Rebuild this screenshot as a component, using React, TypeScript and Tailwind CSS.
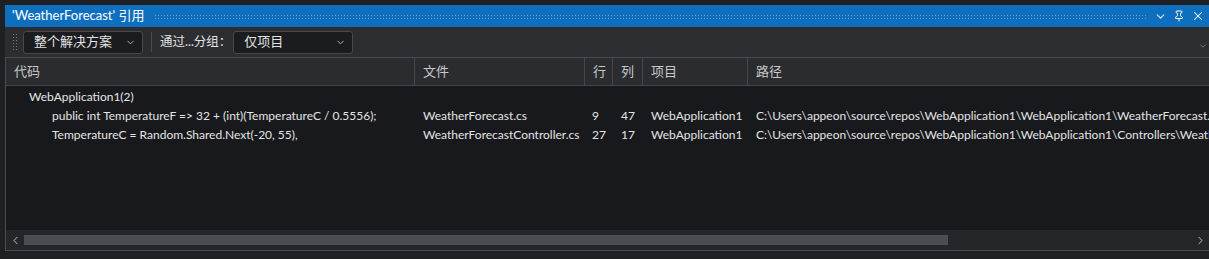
import { ChevronDown, ChevronLeft, ChevronRight, X, Pin } from "lucide-react";

const font = "font-['Lato','Noto_Sans_CJK_SC',sans-serif]";

type Row = {
    code: string;
    file: string;
    line: string;
    col: string;
    project: string;
    path: string;
};

const rows: Row[] = [
    {
        code: "public int TemperatureF => 32 + (int)(TemperatureC / 0.5556);",
        file: "WeatherForecast.cs",
        line: "9",
        col: "47",
        project: "WebApplication1",
        path: "C:\\Users\\appeon\\source\\repos\\WebApplication1\\WebApplication1\\WeatherForecast.cs",
    },
    {
        code: "TemperatureC = Random.Shared.Next(-20, 55),",
        file: "WeatherForecastController.cs",
        line: "27",
        col: "17",
        project: "WebApplication1",
        path: "C:\\Users\\appeon\\source\\repos\\WebApplication1\\WebApplication1\\Controllers\\WeatherForecastController.cs",
    },
];

function Dropdown({ label, width }: { label: string; width: string }) {
    return (
        <div className={`${width} h-[23px] flex items-center justify-between pl-[10px] pr-[6px] bg-[#1b1c1f] border border-[#47494e] rounded-[3px] text-[13px] text-[#e2e2e2]`}>
            <span>{label}</span>
            <ChevronDown size={11} strokeWidth={1.8} className="text-[#c8c8c8]" />
        </div>
    );
}

function HeaderCell({ label, width, last }: { label: string; width: string; last?: boolean }) {
    return (
        <div className={`${width} h-full flex items-center pl-[8px] ${last ? "" : "border-r border-[#45474c]"}`}>
            {label}
        </div>
    );
}

export default function App() {
    return (
        <div className={`w-[1209px] h-[259px] bg-[#1f2023] flex flex-col pt-[5px] pl-[5px] overflow-hidden ${font}`}>
            {/* title bar */}
            <div className="h-[22px] bg-[#0f6fbf] flex items-center pl-[7px] pr-[4px] text-white">
                <span className="text-[13px] whitespace-nowrap">'WeatherForecast' 引用</span>
                <div className="flex-1 h-[5px] ml-[10px] mr-[6px] bg-[radial-gradient(#5b9fdc_0.8px,transparent_0.9px)] bg-[length:3px_3px]" />
                <div className="flex items-center gap-[6px]">
                    <ChevronDown size={13} strokeWidth={2} className="text-[#d8e8f7]" />
                    <Pin size={12} strokeWidth={2} className="text-white" />
                    <X size={14} strokeWidth={1.8} className="text-white" />
                </div>
            </div>

            {/* toolbar */}
            <div className="h-[30px] bg-[#2c2d31] flex items-center pl-[7px] relative">
                <div className="w-[5px] h-[19px] bg-[radial-gradient(circle,#74767a_0.6px,transparent_0.8px)] bg-[length:3px_3px] mr-[6px]" />
                <Dropdown label="整个解决方案" width="w-[120px]" />
                <div className="w-px h-[20px] bg-[#4a4c50] mx-[8px]" />
                <span className="text-[12.5px] text-[#e2e2e2] mr-[2px]">通过...分组：</span>
                <Dropdown label="仅项目" width="w-[120px]" />
                <ChevronDown size={10} strokeWidth={1.8} className="absolute right-[1px] top-[14px] text-[#8a8c90]" />
            </div>

            {/* panel */}
            <div className="flex-1 flex flex-col border-l border-t border-b border-[#4a4c51] bg-[#18191c]">
                <div className="h-[28px] bg-[#2b2c30] border-b border-[#45474c] flex text-[13px] text-[#c9c9c9] shrink-0">
                    <HeaderCell label="代码" width="w-[409px]" />
                    <HeaderCell label="文件" width="w-[170px]" />
                    <HeaderCell label="行" width="w-[28px]" />
                    <HeaderCell label="列" width="w-[30px]" />
                    <HeaderCell label="项目" width="w-[105px]" />
                    <HeaderCell label="路径" width="flex-1" last />
                </div>

                <div className="flex-1 pt-[1px] text-[12px] text-[#e4e4e4] whitespace-nowrap overflow-hidden">
                    <div className="h-[19px] flex items-center pl-[23px]">WebApplication1(2)</div>
                    {rows.map((r) => (
                        <div key={r.file} className="h-[19px] flex items-center">
                            <div className="w-[409px] pl-[46px] shrink-0">{r.code}</div>
                            <div className="w-[170px] pl-[8px] shrink-0">{r.file}</div>
                            <div className="w-[28px] pl-[7px] shrink-0">{r.line}</div>
                            <div className="w-[30px] pl-[8px] shrink-0">{r.col}</div>
                            <div className="w-[105px] pl-[8px] shrink-0">{r.project}</div>
                            <div className="pl-[8px] shrink-0">{r.path}</div>
                        </div>
                    ))}
                </div>

                {/* horizontal scrollbar */}
                <div className="h-[20px] bg-[#25262a] flex items-center shrink-0">
                    <ChevronLeft size={13} strokeWidth={1.8} className="text-[#c5c5c5] ml-[3px] shrink-0" />
                    <div className="w-[924px] h-[10px] bg-[#4b4d52] ml-[2px]" />
                    <div className="flex-1" />
                    <ChevronRight size={13} strokeWidth={1.8} className="text-[#c5c5c5] mr-[2px] shrink-0" />
                </div>
            </div>
            <div className="h-[8px] shrink-0" />
        </div>
    );
}
